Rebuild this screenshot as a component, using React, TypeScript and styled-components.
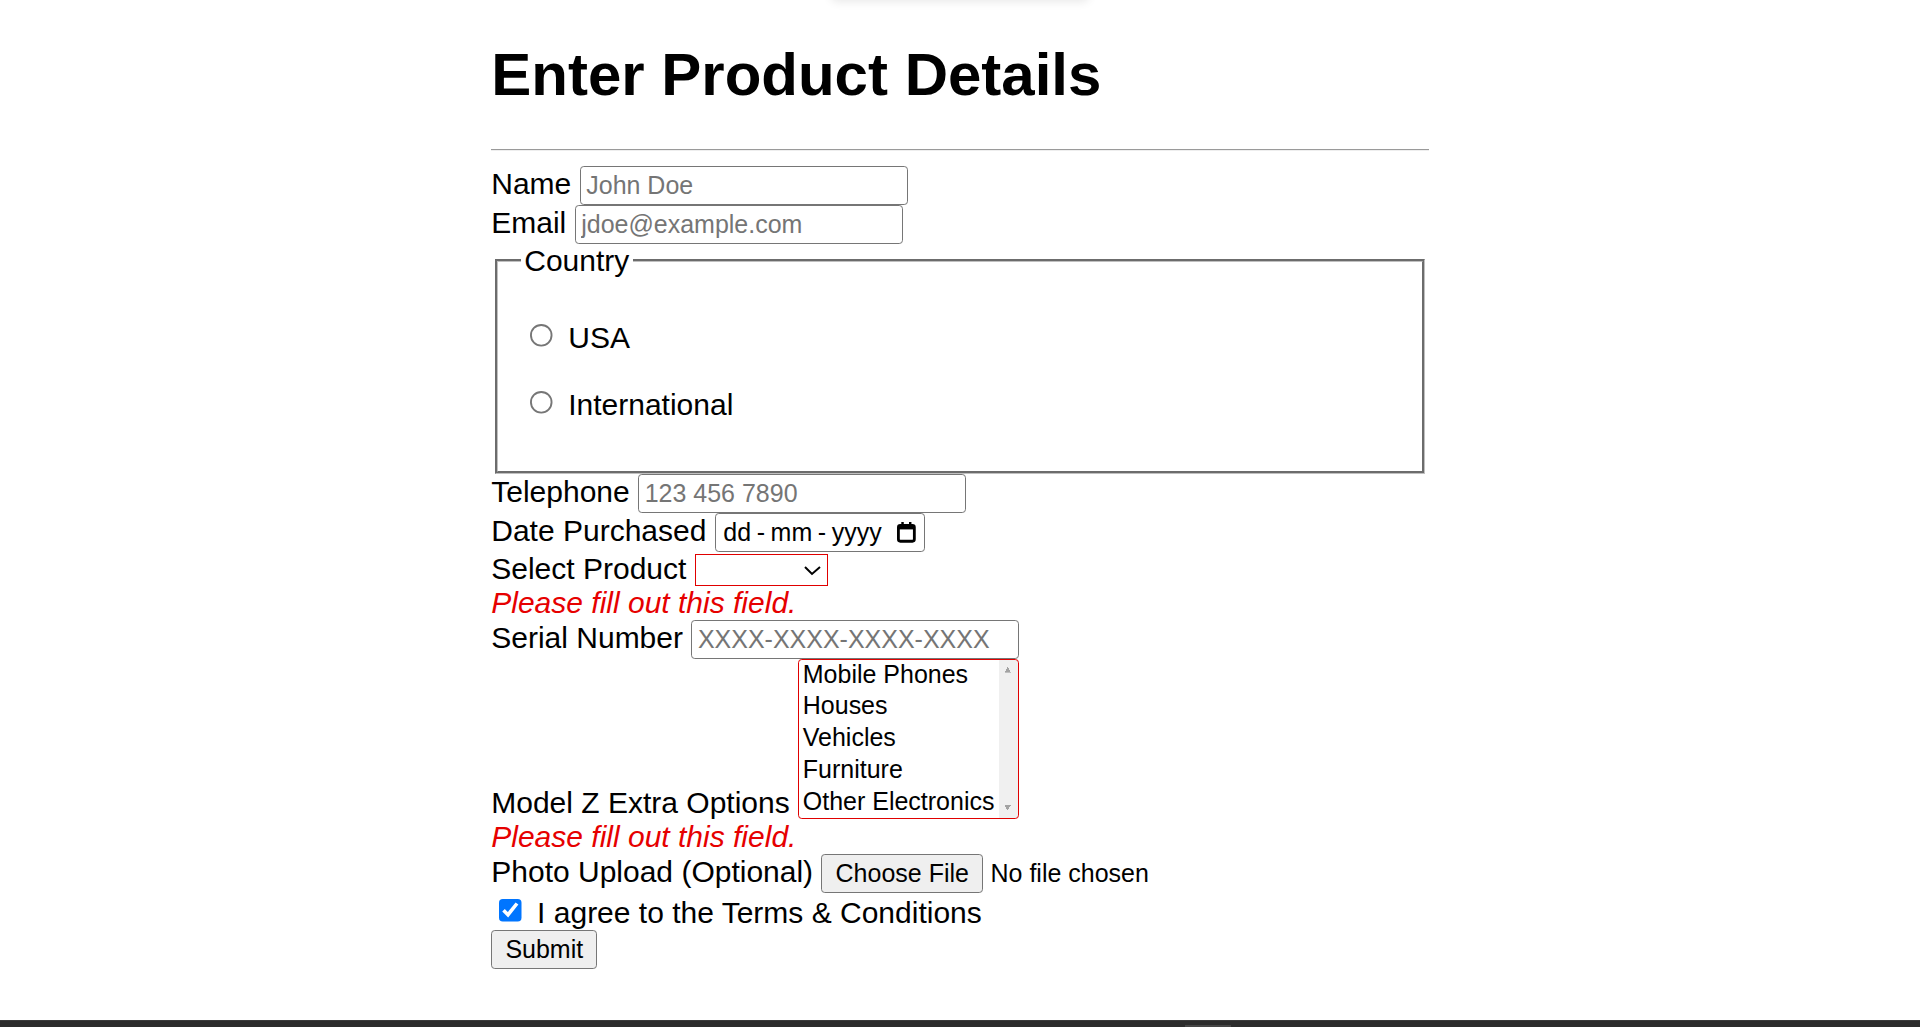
import React from "react";
import styled, { createGlobalStyle } from "styled-components";

const GlobalStyle = createGlobalStyle`
  html, body {
    margin: 0;
    background: #ffffff;
  }
  body {
    font-family: "Liberation Sans", Arial, sans-serif;
    color: #000000;
  }
`;

// the reference was captured at 187.5% zoom, so the whole page is scaled
const Page = styled.div`
  zoom: 1.875;
`;

const Container = styled.main`
  max-width: 500px;
  margin: 0 auto;
`;

const Heading = styled.h1`
  font-size: 2em;
  font-weight: bold;
  margin: 0.67em 0;
`;

const Rule = styled.hr`
  height: 0;
  border: none;
  border-top: 1px solid #9a9a9a;
  border-bottom: 1px solid #eeeeee;
  margin: 0.5em 0;
`;

const Form = styled.form`
  font-size: 16px;
`;

const Row = styled.div``;

const Label = styled.label``;

const TextInput = styled.input`
  font: 13.333px "Liberation Sans", Arial, sans-serif;
  box-sizing: border-box;
  width: 175px;
  height: 20.6px;
  padding: 1px 3px;
  border: 1px solid #767676;
  border-radius: 2px;

  &::placeholder {
    color: #757575;
  }
`;

const Fieldset = styled.fieldset`
  margin: 0 2px;
  padding: 0.35em 0.75em 0.625em;
  border: 2px groove #c0c0c0;
`;

const Legend = styled.legend`
  padding: 0 2px;
`;

const RadioLine = styled.p`
  margin: 1em 0;
`;

const Radio = styled.input`
  margin: 3px 3px 0 5px;
`;

const DateBox = styled.span`
  display: inline-flex;
  align-items: center;
  justify-content: space-between;
  box-sizing: border-box;
  width: 112px;
  height: 21px;
  padding: 0 4px 0 4px;
  border: 1px solid #767676;
  border-radius: 2px;
  font: 13.333px "Liberation Sans", Arial, sans-serif;
  white-space: nowrap;
  color: #000000;
`;

const DateText = styled.span``;

const DateSep = styled.span`
  margin: 0 3px;
`;

const ProductSelect = styled.select`
  font: 13.333px "Liberation Sans", Arial, sans-serif;
  box-sizing: border-box;
  width: 71px;
  height: 17px;
  border: 1px solid #e00000;
  border-radius: 0;
  background: #ffffff;
`;

// listbox with the always-present (disabled) scrollbar of the reference drawn as background layers
const ListBox = styled.select`
  font: 13.333px "Liberation Sans", Arial, sans-serif;
  box-sizing: border-box;
  width: 118px;
  height: 85.5px;
  padding: 0;
  border: 1px solid #e00000;
  border-radius: 2px;
  background:
    conic-gradient(from 150deg at 50% 0, #a3a3a3 60deg, transparent 0) right 3px top 4px / 5px 3px no-repeat,
    conic-gradient(from -30deg at 50% 100%, #a3a3a3 60deg, transparent 0) right 3px bottom 4px / 5px 3px no-repeat,
    linear-gradient(#f0f0f0, #f0f0f0) right top / 10.5px 100% no-repeat,
    #ffffff;

  option {
    padding: 0 2px 1px;
    line-height: 16px;
  }
`;

const ErrorText = styled.span`
  display: block;
  color: #e60000;
  font-style: italic;
`;

const FileInput = styled.input`
  font: 13.333px "Liberation Sans", Arial, sans-serif;

  &::file-selector-button {
    font: 13.333px "Liberation Sans", Arial, sans-serif;
    margin-right: 4px;
    padding: 2px 7px 2.5px;
    border: 1px solid #767676;
    border-radius: 2px;
    background: #efefef;
  }
`;

const Checkbox = styled.input`
  margin: 3px 3px 3px 4px;
`;

const SubmitButton = styled.button`
  font: 13.333px "Liberation Sans", Arial, sans-serif;
  padding: 2px 7px;
  border: 1px solid #767676;
  border-radius: 2px;
  background: #efefef;
  color: #000000;
`;

// faint shadow of a panel sitting just above the viewport
const TopShade = styled.div`
  position: fixed;
  top: -16px;
  left: 50%;
  width: 260px;
  height: 16px;
  margin-left: -130px;
  border-radius: 8px;
  box-shadow: 0 2px 10px rgba(0, 0, 0, 0.09);
`;

const BottomBar = styled.div`
  position: fixed;
  left: 0;
  right: 0;
  bottom: 0;
  height: 6px;
  background: #2b2b2b;
  border-top: 1px solid #3a3a3a;
`;

const BarTab = styled.div`
  position: absolute;
  left: 1185px;
  bottom: 0;
  width: 46px;
  height: 2px;
  background: #454545;
`;

const CalendarIcon = () => (
  <svg width="10" height="11" viewBox="0 0 10 11" fill="none">
    <rect x="0.75" y="1.75" width="8.5" height="8.5" rx="1" stroke="#000" strokeWidth="1.5" />
    <rect x="0.75" y="1.75" width="8.5" height="2.2" fill="#000" />
    <rect x="2.3" y="0" width="1.3" height="2.5" fill="#000" />
    <rect x="6.4" y="0" width="1.3" height="2.5" fill="#000" />
  </svg>
);

const categories = ["Mobile Phones", "Houses", "Vehicles", "Furniture", "Other Electronics"];

export default function App() {
  return (
    <>
      <GlobalStyle />
      <TopShade />
      <Page>
        <Container>
          <Heading>Enter Product Details</Heading>
          <Rule />
          <Form onSubmit={(e) => e.preventDefault()}>
            <Row>
              <Label htmlFor="name">Name</Label> <TextInput id="name" type="text" placeholder="John Doe" />
            </Row>
            <Row>
              <Label htmlFor="email">Email</Label>{" "}
              <TextInput id="email" type="email" placeholder="jdoe@example.com" />
            </Row>
            <Fieldset>
              <Legend>Country</Legend>
              <RadioLine>
                <Radio id="usa" type="radio" name="country" value="usa" /> <Label htmlFor="usa">USA</Label>
              </RadioLine>
              <RadioLine>
                <Radio id="intl" type="radio" name="country" value="international" />{" "}
                <Label htmlFor="intl">International</Label>
              </RadioLine>
            </Fieldset>
            <Row>
              <Label htmlFor="tel">Telephone</Label> <TextInput id="tel" type="tel" placeholder="123 456 7890" />
            </Row>
            <Row>
              <Label htmlFor="date">Date Purchased</Label>{" "}
              <DateBox id="date">
                <DateText>
                  dd<DateSep>-</DateSep>mm<DateSep>-</DateSep>yyyy
                </DateText>
                <CalendarIcon />
              </DateBox>
            </Row>
            <Row>
              <Label htmlFor="product">Select Product</Label>{" "}
              <ProductSelect id="product" defaultValue="">
                <option value="" />
              </ProductSelect>
              <ErrorText>Please fill out this field.</ErrorText>
            </Row>
            <Row>
              <Label htmlFor="serial">Serial Number</Label>{" "}
              <TextInput id="serial" type="text" placeholder="XXXX-XXXX-XXXX-XXXX" />
            </Row>
            <Row>
              <Label htmlFor="extras">Model Z Extra Options</Label>{" "}
              <ListBox id="extras" multiple size={5}>
                {categories.map((c) => (
                  <option key={c} value={c}>
                    {c}
                  </option>
                ))}
              </ListBox>
              <ErrorText>Please fill out this field.</ErrorText>
            </Row>
            <Row>
              <Label htmlFor="photo">Photo Upload (Optional)</Label> <FileInput id="photo" type="file" />
            </Row>
            <Row>
              <Checkbox id="terms" type="checkbox" defaultChecked />{" "}
              <Label htmlFor="terms">I agree to the Terms &amp; Conditions</Label>
            </Row>
            <SubmitButton type="submit">Submit</SubmitButton>
          </Form>
        </Container>
      </Page>
      <BottomBar>
        <BarTab />
      </BottomBar>
    </>
  );
}
